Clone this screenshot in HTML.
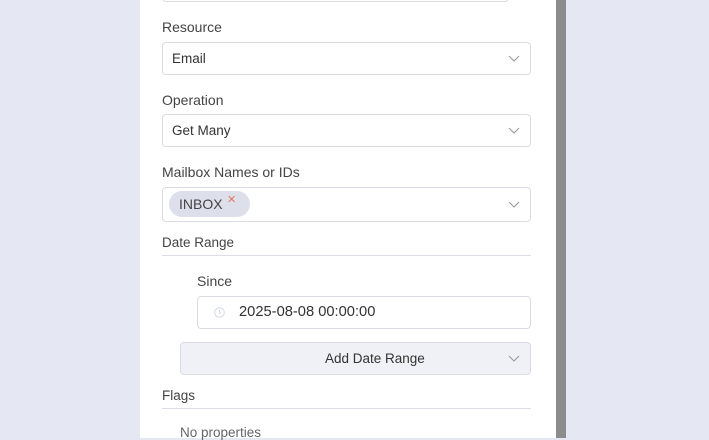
<!DOCTYPE html>
<html><head><style>
body{margin:0;width:709px;height:438px;background:#e5e8f2;font-family:"Liberation Sans",sans-serif;position:relative;overflow:hidden;color:#444}
.panel{position:absolute;left:140px;top:0;width:416px;height:438px;background:#fff}
.bar{position:absolute;left:556px;top:0;width:10px;height:438px;background:#8c8c8c}
.a{position:absolute}
.lbl{font-size:14px;color:#444}
.inp{position:absolute;border:1px solid #dadbe6;border-radius:4px;background:#fff;box-sizing:border-box;font-size:13.5px;color:#333}
.chev{position:absolute;right:10px;top:50%;margin-top:-4px}
.line{position:absolute;height:1px;background:#dcdde8}
</style></head><body>
<div class="panel"></div>
<div class="bar"></div>
<div class="inp" style="left:162px;top:-32px;width:347px;height:34px"></div>

<div class="a lbl" style="left:162px;top:19px">Resource</div>
<div class="inp" style="left:162px;top:42px;width:369px;height:33px"><span class="a" style="left:9px;top:8px">Email</span><svg class="chev" width="12" height="8"><path d="M1 1l5 5 5-5" fill="none" stroke="#999" stroke-width="1"/></svg></div>

<div class="a lbl" style="left:162px;top:92px">Operation</div>
<div class="inp" style="left:162px;top:114px;width:369px;height:33px"><span class="a" style="left:9px;top:8px">Get Many</span><svg class="chev" width="12" height="8"><path d="M1 1l5 5 5-5" fill="none" stroke="#999" stroke-width="1"/></svg></div>

<div class="a lbl" style="left:162px;top:164px">Mailbox Names or IDs</div>
<div class="inp" style="left:162px;top:187px;width:369px;height:35px">
<div class="a" style="left:6px;top:3px;width:81px;height:26px;border-radius:13px;background:#dde0ea"><span class="a" style="left:10px;top:5px;font-size:14px;color:#444">INBOX</span><span class="a" style="left:58px;top:2px;font-size:11px;color:#e8735f">✕</span></div>
<svg class="chev" width="12" height="8"><path d="M1 1l5 5 5-5" fill="none" stroke="#999" stroke-width="1"/></svg></div>

<div class="a" style="left:162px;top:235px;font-size:13.5px;color:#444">Date Range</div>
<div class="line" style="left:162px;top:255px;width:369px"></div>

<div class="a lbl" style="left:197px;top:273px">Since</div>
<div class="inp" style="left:197px;top:296px;width:334px;height:33px">
<svg class="a" style="left:16px;top:10px" width="11" height="11"><circle cx="5.5" cy="5.5" r="4.8" fill="none" stroke="#d8dae6"/><path d="M5.5 3v3h2" fill="none" stroke="#d8dae6"/></svg>
<span class="a" style="left:41px;top:7px;font-size:14.7px">2025-08-08 00:00:00</span></div>

<div class="inp" style="left:180px;top:342px;width:351px;height:33px;background:#f0f1f7"><span class="a" style="left:144px;top:8px">Add Date Range</span><svg class="chev" width="12" height="8"><path d="M1 1l5 5 5-5" fill="none" stroke="#999" stroke-width="1"/></svg></div>

<div class="a" style="left:162px;top:388px;font-size:13.5px;color:#444">Flags</div>
<div class="line" style="left:162px;top:408px;width:369px"></div>
<div class="a" style="left:180px;top:425px;font-size:13.5px;color:#666">No properties</div>
</body></html>
